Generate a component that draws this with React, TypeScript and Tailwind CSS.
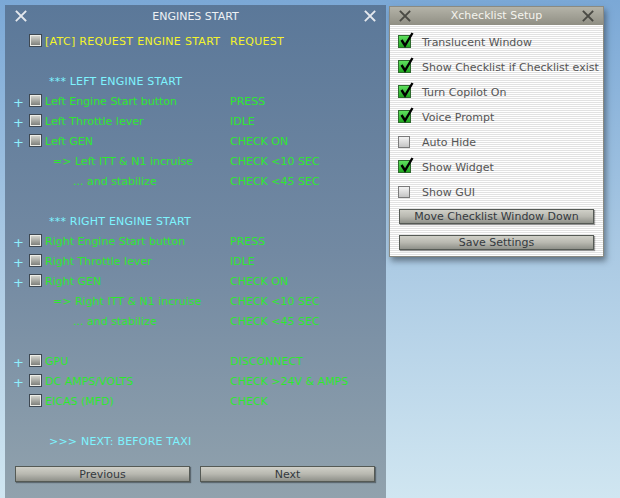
import React from 'react';

type Row =
  | { kind: 'item'; plus?: boolean; label: string; value: string; tone?: 'green' | 'yellow' }
  | { kind: 'sub'; indent: number; label: string; value: string }
  | { kind: 'head'; label: string }
  | { kind: 'gap' };

const rows: Row[] = [
  { kind: 'item', label: '[ATC] REQUEST ENGINE START', value: 'REQUEST', tone: 'yellow' },
  { kind: 'gap' },
  { kind: 'head', label: '*** LEFT ENGINE START' },
  { kind: 'item', plus: true, label: 'Left Engine Start button', value: 'PRESS' },
  { kind: 'item', plus: true, label: 'Left Throttle lever', value: 'IDLE' },
  { kind: 'item', plus: true, label: 'Left GEN', value: 'CHECK ON' },
  { kind: 'sub', indent: 8, label: '=> Left ITT & N1 incruise', value: 'CHECK <10 SEC' },
  { kind: 'sub', indent: 28, label: '... and stabilize', value: 'CHECK <45 SEC' },
  { kind: 'gap' },
  { kind: 'head', label: '*** RIGHT ENGINE START' },
  { kind: 'item', plus: true, label: 'Right Engine Start button', value: 'PRESS' },
  { kind: 'item', plus: true, label: 'Right Throttle lever', value: 'IDLE' },
  { kind: 'item', plus: true, label: 'Right GEN', value: 'CHECK ON' },
  { kind: 'sub', indent: 8, label: '=> Right ITT & N1 incruise', value: 'CHECK <10 SEC' },
  { kind: 'sub', indent: 28, label: '... and stabilize', value: 'CHECK <45 SEC' },
  { kind: 'gap' },
  { kind: 'item', plus: true, label: 'GPU', value: 'DISCONNECT' },
  { kind: 'item', plus: true, label: 'DC AMPS/VOLTS', value: 'CHECK >24V & AMPS' },
  { kind: 'item', label: 'EICAS (MFD)', value: 'CHECK' },
  { kind: 'gap' },
  { kind: 'head', label: '>>> NEXT: BEFORE TAXI' },
];

const settings = [
  { label: 'Translucent Window', on: true },
  { label: 'Show Checklist if Checklist exist', on: true },
  { label: 'Turn Copilot On', on: true },
  { label: 'Voice Prompt', on: true },
  { label: 'Auto Hide', on: false },
  { label: 'Show Widget', on: true },
  { label: 'Show GUI', on: false },
];

const CloseX = ({ color }: { color: string }) => (
  <svg width="12" height="12" viewBox="0 0 12 12">
    <path d="M1.5 1.5 L10.5 10.5 M10.5 1.5 L1.5 10.5" stroke={color} strokeWidth="1.8" strokeLinecap="square" />
  </svg>
);

const GrayBox = () => (
  <span className="block w-[13px] h-[13px] border border-[#3e4852] bg-gradient-to-b from-[#dcdcd6] via-[#a9aaa4] to-[#777975] shadow-[inset_0_0_0_1px_#ecece6]" />
);

const GreenBox = () => (
  <span className="relative block w-[13px] h-[13px] border border-[#2e6a2e] bg-gradient-to-b from-[#5ee05e] to-[#1fa81f]">
    <svg className="absolute left-[1px] top-[-4px]" width="14" height="16" viewBox="0 0 14 16">
      <path d="M1.5 8 L5 13.5 L12.5 1" fill="none" stroke="#000" strokeWidth="2.4" />
    </svg>
  </span>
);

const UnBox = () => (
  <span className="block w-[12px] h-[12px] border border-[#7a7a7a] bg-gradient-to-b from-[#f4f4f4] to-[#c4c4c4]" />
);

const MetalButton = ({ label, className }: { label: string; className: string }) => (
  <div
    className={`flex items-center justify-center border border-[#555a55] bg-gradient-to-b from-[#d0d0c8] via-[#b8b8b0] to-[#8f918a] text-[#34393e] text-[11px] leading-none shadow-[1px_1px_1px_rgba(0,0,0,0.35)] ${className}`}
  >
    {label}
  </div>
);

export default function App() {
  return (
    <div
      className="w-[620px] h-[498px] overflow-hidden flex items-start bg-gradient-to-b from-[#7ba8d6] via-[#aac9e3] to-[#d0e6f1]"
      style={{ fontFamily: '"DejaVu Sans", Verdana, sans-serif' }}
    >
      {/* Checklist window */}
      <div className="ml-[5px] mt-[5px] w-[381px] h-[493px] flex flex-col bg-gradient-to-b from-[#5b7899] via-[#7289a2] to-[#91a2ad]">
        <div className="h-[27px] flex items-start pt-[5px] px-[10px]">
          <CloseX color="#e4e8ee" />
          <div className="flex-1 text-center text-[11px] leading-[14px] text-[#eef1f4]">ENGINES START</div>
          <CloseX color="#e4e8ee" />
        </div>

        <div className="flex flex-col text-[11px]">
          {rows.map((r, i) => {
            if (r.kind === 'gap') return <div key={i} className="h-[20px]" />;
            if (r.kind === 'head')
              return (
                <div key={i} className="h-[20px] flex items-center pl-[44px] text-[#7ef4ff] tracking-[0.2px]">
                  {r.label}
                </div>
              );
            if (r.kind === 'sub')
              return (
                <div key={i} className="h-[20px] flex items-center text-[#2ee82e]">
                  <span className="w-[225px] shrink-0" style={{ paddingLeft: 40 + r.indent }}>
                    {r.label}
                  </span>
                  <span>{r.value}</span>
                </div>
              );
            const color = r.tone === 'yellow' ? 'text-[#f4f42c] tracking-[0.3px]' : 'text-[#2ee82e]';
            return (
              <div key={i} className={`h-[20px] flex items-center ${color}`}>
                <span className="w-[24px] shrink-0 pl-[8px] text-[#8ff0ff] text-[13px] leading-none">{r.plus ? '+' : ''}</span>
                <span className="w-[16px] shrink-0 -mt-[4px]">
                  <GrayBox />
                </span>
                <span className="w-[185px] shrink-0 whitespace-nowrap">{r.label}</span>
                <span className="whitespace-nowrap">{r.value}</span>
              </div>
            );
          })}
        </div>

        <div className="mt-[14px] flex gap-[10px] px-[10px]">
          <MetalButton label="Previous" className="w-[175px] h-[16px]" />
          <MetalButton label="Next" className="w-[175px] h-[16px]" />
        </div>
      </div>

      {/* Setup window */}
      <div className="ml-[3px] mt-[6px] w-[215px] h-[251px] flex flex-col border border-[#8a8a82] shadow-[2px_4px_6px_rgba(40,50,60,0.55)] bg-[repeating-linear-gradient(to_bottom,#ffffff_0px,#ffffff_1px,#e2e2e2_1px,#e2e2e2_2px)]">
        <div className="h-[18px] flex items-center px-[9px] bg-gradient-to-b from-[#b4b3a8] to-[#908f84]">
          <CloseX color="#4a4a44" />
          <div className="flex-1 text-center text-[11px] text-[#f4f4ee]">Xchecklist Setup</div>
          <CloseX color="#4a4a44" />
        </div>
        <div className="flex flex-col pt-[6px] text-[11px] text-[#555]">
          {settings.map((s) => (
            <div key={s.label} className="h-[25px] flex items-center pl-[8px]">
              <span className="w-[24px] shrink-0 -mt-[4px]">{s.on ? <GreenBox /> : <UnBox />}</span>
              <span className="whitespace-nowrap">{s.label}</span>
            </div>
          ))}
        </div>
        <div className="flex flex-col gap-[11px] px-[9px] mt-[3px]">
          <MetalButton label="Move Checklist Window Down" className="w-[195px] h-[15px]" />
          <MetalButton label="Save Settings" className="w-[195px] h-[15px]" />
        </div>
      </div>
    </div>
  );
}
